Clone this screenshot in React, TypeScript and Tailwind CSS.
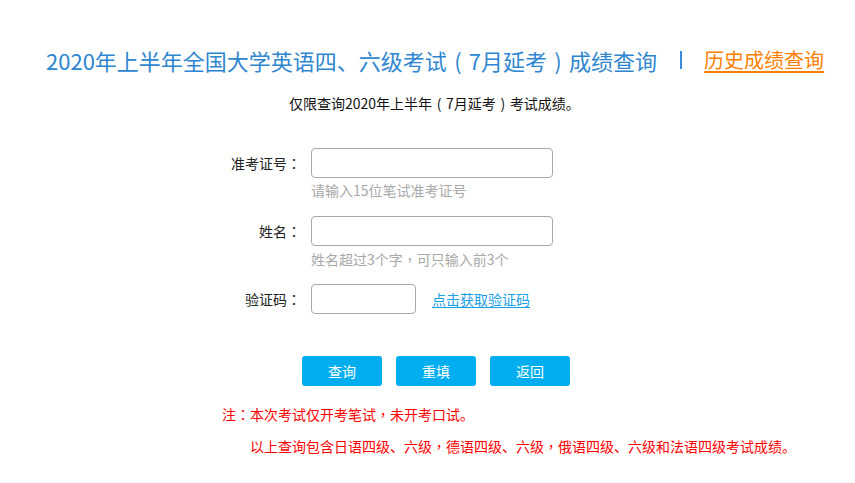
import React from "react";

const TC = '"Noto Sans CJK TC", sans-serif';

function P({ t }: { t: string }) {
  const parts = t.split(/([，：（）])/);
  return (
    <>
      {parts.map((p, i) => {
        if (p === "（" || p === "）")
          return (
            <span key={i} className="inline-block w-[1em] text-center">{p === "（" ? "(" : ")"}</span>
          );
        if (p === "，" || p === "：")
          return <span key={i} style={{ fontFamily: TC }}>{p}</span>;
        return <React.Fragment key={i}>{p}</React.Fragment>;
      })}
    </>
  );
}

const Field = ({ label, width, children }: { label: string; width: string; children?: React.ReactNode }) => (
  <div className="flex items-center">
    <div className="w-[91px] ml-[210px] text-right text-[14px] leading-[20px] text-[#222]"><P t={label} /></div>
    <input className={`${width} h-[30px] ml-[10px] border border-[#a9a9a9] rounded-[4px] outline-none bg-white`} />
    {children}
  </div>
);

export default function App() {
  return (
    <div className="w-[855px] h-[483px] bg-white overflow-hidden" style={{ fontFamily: '"Noto Sans CJK SC", "Noto Sans", sans-serif' }}>
      <div className="pt-[45px] pl-[46px] flex items-center h-[30px] box-content">
        <div className="text-[22px] leading-[30px] text-[#2e86d1] whitespace-nowrap"><P t="2020年上半年全国大学英语四、六级考试（7月延考）成绩查询" /></div>
        <div className="ml-[23px] w-[2px] h-[18px] bg-[#3a8dd6]"></div>
        <a className="ml-[22px] text-[20px] leading-[28px] text-[#ff8000] underline underline-offset-[3px] whitespace-nowrap">历史成绩查询</a>
      </div>
      <div className="mt-[18px] pl-[289px] text-[14px] leading-[20px] text-[#111] whitespace-nowrap"><P t="仅限查询2020年上半年（7月延考）考试成绩。" /></div>
      <div className="mt-[35px]">
        <Field label="准考证号：" width="w-[242px]" />
        <div className="ml-[311px] mt-[2px] text-[14px] leading-[20px] text-[#a8a8a8]">请输入15位笔试准考证号</div>
      </div>
      <div className="mt-[16px]">
        <Field label="姓名：" width="w-[242px]" />
        <div className="ml-[311px] mt-[3px] text-[14px] leading-[20px] text-[#a8a8a8]"><P t="姓名超过3个字，可只输入前3个" /></div>
      </div>
      <div className="mt-[15px]">
        <Field label="验证码：" width="w-[105px]">
          <a className="ml-[16px] text-[14px] leading-[20px] text-[#18a0e6] underline underline-offset-2 whitespace-nowrap">点击获取验证码</a>
        </Field>
      </div>
      <div className="mt-[42px] ml-[302px] flex gap-[14px]">
        <button className="w-[80px] h-[30px] rounded-[3px] bg-[#00aeef] text-white text-[14px]">查询</button>
        <button className="w-[80px] h-[30px] rounded-[3px] bg-[#00aeef] text-white text-[14px]">重填</button>
        <button className="w-[80px] h-[30px] rounded-[3px] bg-[#00aeef] text-white text-[14px]">返回</button>
      </div>
      <div className="mt-[18px] ml-[222px] text-[14px] leading-[20px] text-[#ff0000] whitespace-nowrap"><P t="注：本次考试仅开考笔试，未开考口试。" /></div>
      <div className="mt-[12px] ml-[250px] text-[14px] leading-[20px] text-[#ff0000] whitespace-nowrap"><P t="以上查询包含日语四级、六级，德语四级、六级，俄语四级、六级和法语四级考试成绩。" /></div>
    </div>
  );
}
